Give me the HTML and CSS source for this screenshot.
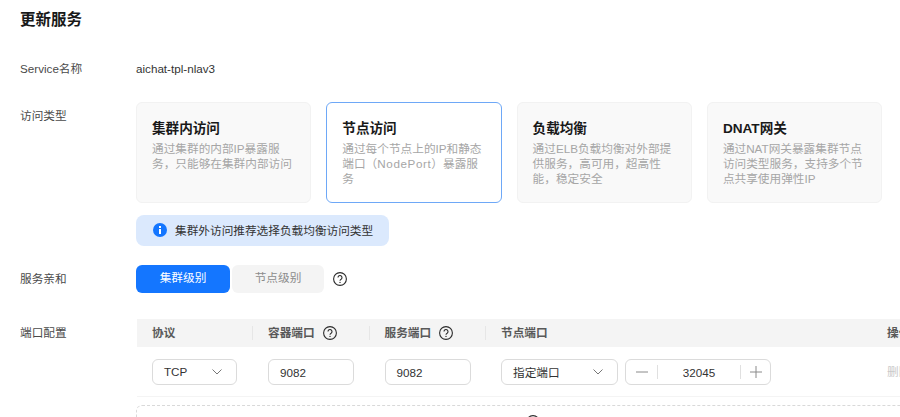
FILE: index.html
```html
<!DOCTYPE html>
<html lang="zh-CN">
<head>
<meta charset="utf-8">
<title>更新服务</title>
<link rel="stylesheet" href="styles.css">
</head>
<body>
<main class="page">
  <h1 class="title">更新服务</h1>
  <div class="row row-name">
    <div class="label">Service名称</div>
    <div class="value">aichat-tpl-nlav3</div>
  </div>
  <div class="row row-type">
    <div class="label label-type">访问类型</div>
    <div class="content">
      <div class="cards">
        <div class="card">
          <div class="card-title">集群内访问</div>
          <div class="card-desc">通过集群的内部IP暴露服务，只能够在集群内部访问</div>
        </div>
        <div class="card card-active">
          <div class="card-title">节点访问</div>
          <div class="card-desc">通过每个节点上的IP和静态端口（<span class="wide">NodePort</span>）暴露服务</div>
        </div>
        <div class="card">
          <div class="card-title">负载均衡</div>
          <div class="card-desc">通过ELB负载均衡对外部提供服务，高可用，超高性能，稳定安全</div>
        </div>
        <div class="card">
          <div class="card-title">DNAT网关</div>
          <div class="card-desc">通过NAT网关暴露集群节点访问类型服务，支持多个节点共享使用弹性IP</div>
        </div>
      </div>
      <div class="alert">
        <svg class="alert-icon" viewBox="0 0 14 14" width="14" height="14"><circle cx="7" cy="7" r="7" fill="#1476ff"/><rect x="6" y="6" width="2" height="5" fill="#fff"/><rect x="6" y="3" width="2" height="2" fill="#fff"/></svg>
        <span>集群外访问推荐选择负载均衡访问类型</span>
      </div>
    </div>
  </div>
  <div class="row row-aff">
    <div class="label">服务亲和</div>
    <div class="seg">
      <div class="seg-btn seg-on">集群级别</div>
      <div class="seg-btn seg-off">节点级别</div>
    </div>
    <svg class="help help-seg" viewBox="0 0 14 14" width="14" height="14"><use href="#q"/></svg>
  </div>
  <div class="row row-port">
    <div class="label label-port">端口配置</div>
    <div class="port-wrap">
      <div class="thead">
        <div class="th col1"><span class="th-text">协议</span></div>
        <div class="th col2"><span class="th-text">容器端口</span><svg class="help" viewBox="0 0 14 14" width="14" height="14"><use href="#q"/></svg></div>
        <div class="th col3"><span class="th-text">服务端口</span><svg class="help" viewBox="0 0 14 14" width="14" height="14"><use href="#q"/></svg></div>
        <div class="th col4"><span class="th-text">节点端口</span></div>
        <div class="th col5"><span class="th-text">操作</span></div>
      </div>
      <div class="tbody">
        <div class="td col1">
          <div class="ctl select select-proto"><span class="sel-text">TCP</span><svg class="chev" viewBox="0 0 10 6" width="10" height="6"><path d="M.5 .5l4.5 4.5 4.5-4.5" fill="none" stroke="#777" stroke-width="1"/></svg></div>
        </div>
        <div class="td col2"><div class="ctl input">9082</div></div>
        <div class="td col3"><div class="ctl input">9082</div></div>
        <div class="td col4 node">
          <div class="ctl select select-node"><span class="sel-text">指定端口</span><svg class="chev" viewBox="0 0 10 6" width="10" height="6"><path d="M.5 .5l4.5 4.5 4.5-4.5" fill="none" stroke="#777" stroke-width="1"/></svg></div>
          <div class="ctl stepper">
            <div class="step step-l"><svg viewBox="0 0 12 12" width="12" height="12"><path d="M0 6h12" stroke="#8a8a8a" stroke-width="1"/></svg></div>
            <div class="step-val">32045</div>
            <div class="step step-r"><svg viewBox="0 0 12 12" width="12" height="12"><path d="M0 6h12M6 0v12" stroke="#8a8a8a" stroke-width="1"/></svg></div>
          </div>
        </div>
        <div class="td col5 del">删除</div>
      </div>
      <div class="add">
        <svg class="help" viewBox="0 0 14 14" width="14" height="14"><use href="#q"/></svg>
      </div>
    </div>
  </div>
</main>
<svg class="defs" width="0" height="0">
  <symbol id="q" viewBox="0 0 14 14">
    <circle cx="7" cy="7" r="6.4" fill="none" stroke="#2b2b2b" stroke-width="1.1"/>
    <path d="M5 5.5a2 2 0 1 1 3.1 1.7c-.7.4-1.1.8-1.1 1.6" fill="none" stroke="#2b2b2b" stroke-width="1.1"/>
    <circle cx="7" cy="10.4" r=".7" fill="#2b2b2b"/>
  </symbol>
</svg>
</body>
</html>
```

FILE: styles.css
```css
* { box-sizing: border-box; }
html, body { margin: 0; height: 100%; overflow: hidden; background: #fff; }
body {
  font-family: "Liberation Sans", "Noto Sans CJK SC", sans-serif;
  font-size: 11.67px;
  color: #191919;
}
.page { width: 1000px; padding: 11px 0 0 20px; }
.title { margin: 0; font-size: 15.5px; line-height: 18px; font-weight: 700; color: #191919; }
.row { display: flex; }
.label { width: 116px; flex: none; color: #4a4a4a; line-height: 18px; }
.row-name { margin-top: 31px; }
.value { line-height: 18px; color: #333; }
.row-type { margin-top: 24px; }
.label-type { padding-top: 5px; }
.content { display: flex; flex-direction: column; align-items: flex-start; }
.cards { display: flex; gap: 15px; width: 747px; }
.card {
  width: 175.3px; height: 101px; flex: none;
  padding: 14px 15px;
  background: #f9f9f9;
  border: 1px solid #f2f2f2;
  border-radius: 6px;
}
.card-active { background: #fff; border-color: #6ea8f7; }
.card-title { font-size: 13.6px; line-height: 23px; margin-bottom: 1px; font-weight: 700; color: #191919; }
.card-desc { line-height: 15px; color: #a6a6a6; }
.wide { letter-spacing: .6px; }
.alert {
  display: flex; align-items: center; gap: 8.5px;
  margin-top: 12px; height: 31px; padding: 0 16px 2px 16.5px;
  background: #dbe9fd; border-radius: 8px; color: #333;
}
.alert-icon { flex: none; }
.row-aff { margin-top: 19px; align-items: center; height: 28px; }
.seg { display: flex; gap: 2px; }
.seg-btn {
  width: 94px; height: 28px; display: flex; align-items: center; justify-content: center;
  padding-bottom: 5px; border-radius: 6px;
}
.seg-on { background: #1476ff; color: #fff; }
.seg-off { width: 92px; background: #f4f4f4; color: #8c8c8c; }
.help { flex: none; display: block; }
.help-seg { margin-left: 9px; }
.row-port { margin-top: 26px; }
.label-port { padding-top: 5px; }
.port-wrap { flex: none; width: 864px; }
.thead { display: flex; height: 28px; margin-left: 1px; background: #f4f4f4; align-items: center; }
.tbody { display: flex; height: 50px; margin-left: 1px; border-bottom: 1px solid #f4f4f4; align-items: flex-start; padding-top: 12px; }
.col1 { width: 115px; flex: none; }
.col2 { width: 116.5px; flex: none; }
.col3 { width: 116.5px; flex: none; }
.col4 { width: 386px; flex: none; }
.col5 { width: 100px; flex: none; }
.th {
  display: flex; align-items: center; gap: 8px; height: 14px;
  padding-left: 15px;
  font-weight: 700; color: #595959;
  border-left: 1px solid #e6e6e6;
}
.th-text { margin-bottom: 3px; }
.th.col1 { border-left: 0; }
.th.col5 { border-left-color: transparent; }
.td { padding-left: 16px; }
.td.col1 { padding-left: 15px; }
.ctl {
  display: flex; align-items: center;
  height: 26px; border: 1px solid #dbdbdb; border-radius: 6px; color: #333; background: #fff;
}
.select { justify-content: space-between; padding: 0 14px 0 11px; }
.sel-text { margin-bottom: 2px; }
.select-proto { width: 85px; }
.select-node { width: 117px; }
.input { width: 86px; padding-left: 11px; }
.node { display: flex; gap: 7px; }
.stepper { width: 146px; }
.step { height: 14px; flex: none; display: flex; align-items: center; justify-content: center; }
.step-l { width: 32px; border-right: 1px solid #e0e0e0; }
.step-r { width: 30px; border-left: 1px solid #e0e0e0; }
.step-val { flex: 1; text-align: center; }
.del { color: #c9c9c9; line-height: 26px; }
.add {
  height: 60px; margin-top: 8px;
  border: 1px dashed #d9d9d9; border-radius: 6px;
  padding: 9px 0 0 389px;
}
.defs { position: absolute; }
```
